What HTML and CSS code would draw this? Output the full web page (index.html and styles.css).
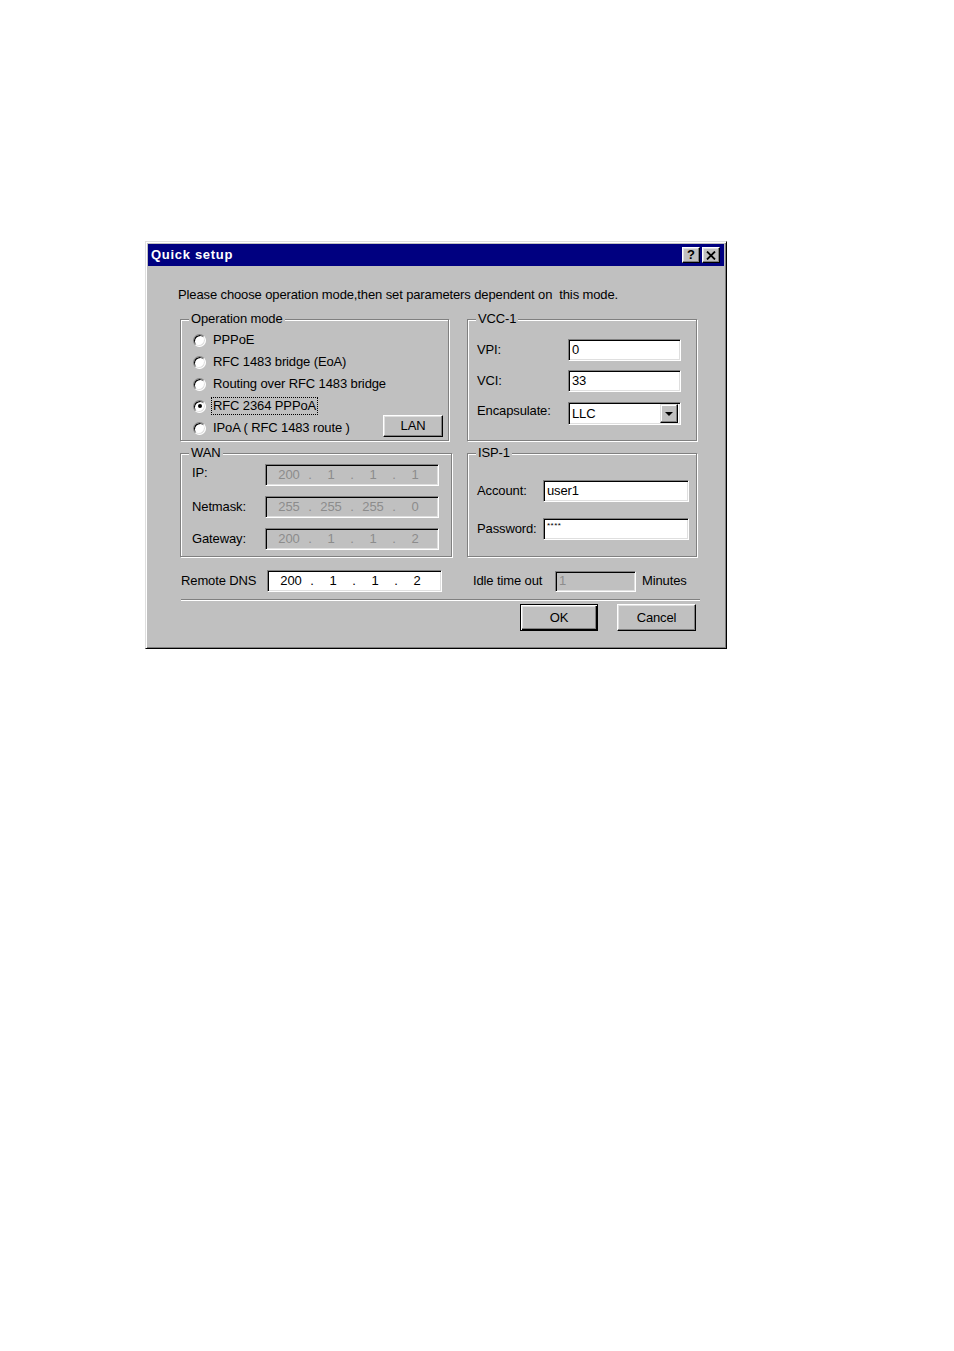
FILE: index.html
```html
<!DOCTYPE html>
<html>
<head>
<meta charset="utf-8">
<title>Quick setup</title>
<link rel="stylesheet" href="styles.css">
</head>
<body>
<div class="dialog">
  <div class="titlebar">
    <span class="title">Quick setup</span>
    <span class="cap-btn help">?</span>
    <span class="cap-btn close"><svg width="10" height="9" viewBox="0 0 10 9"><path d="M1 0.5 L9 8.5 M9 0.5 L1 8.5" stroke="#000" stroke-width="1.8" fill="none"/></svg></span>
  </div>
  <div class="content">
    <div class="intro">Please choose operation mode,then set parameters dependent on &nbsp;this mode.</div>

    <div class="row row1">
      <div class="group opmode">
        <div class="gtitle">Operation mode</div>
        <div class="radio-row"><span class="radio"></span><span>PPPoE</span></div>
        <div class="radio-row"><span class="radio"></span><span>RFC 1483 bridge (EoA)</span></div>
        <div class="radio-row"><span class="radio"></span><span>Routing over RFC 1483 bridge</span></div>
        <div class="radio-row"><span class="radio checked"></span><span class="focus">RFC 2364 PPPoA</span></div>
        <div class="radio-row"><span class="radio"></span><span>IPoA ( RFC 1483 route )</span><span class="btn lan">LAN</span></div>
      </div>
      <div class="group vcc">
        <div class="gtitle">VCC-1</div>
        <div class="form vcc-form">
          <span class="lbl">VPI:</span><span class="field">0</span>
          <span class="lbl">VCI:</span><span class="field">33</span>
          <span class="lbl enc">Encapsulate:</span><span class="field select"><span>LLC</span><span class="drop"><svg width="8" height="4" viewBox="0 0 8 4"><path d="M0 0 H8 L4 4 Z" fill="#000"/></svg></span></span>
        </div>
      </div>
    </div>

    <div class="row row2">
      <div class="group wan">
        <div class="gtitle">WAN</div>
        <div class="form wan-form">
          <span class="lbl">IP:</span>
          <span class="field ip disabled"><span>200</span><i>.</i><span>1</span><i>.</i><span>1</span><i>.</i><span>1</span></span>
          <span class="lbl">Netmask:</span>
          <span class="field ip disabled"><span>255</span><i>.</i><span>255</span><i>.</i><span>255</span><i>.</i><span>0</span></span>
          <span class="lbl">Gateway:</span>
          <span class="field ip disabled"><span>200</span><i>.</i><span>1</span><i>.</i><span>1</span><i>.</i><span>2</span></span>
        </div>
      </div>
      <div class="group isp">
        <div class="gtitle">ISP-1</div>
        <div class="form isp-form">
          <span class="lbl">Account:</span><span class="field">user1</span>
          <span class="lbl">Password:</span><span class="field pwd">****</span>
        </div>
      </div>
    </div>

    <div class="bottom">
      <span class="lbl dns-lbl">Remote DNS</span>
      <span class="field ip dns"><span>200</span><i>.</i><span>1</span><i>.</i><span>1</span><i>.</i><span>2</span></span>
      <span class="lbl idle-lbl">Idle time out</span>
      <span class="field idle disabled">1</span>
      <span class="lbl minutes">Minutes</span>
    </div>

    <div class="separator"></div>

    <div class="buttons">
      <span class="btn default">OK</span>
      <span class="btn cancel">Cancel</span>
    </div>
  </div>
</div>
</body>
</html>
```

FILE: styles.css
```css
html, body {
  margin: 0;
  padding: 0;
  background: #ffffff;
}

body {
  font-family: "Liberation Sans", Arial, sans-serif;
  font-size: 13px;
  line-height: 14px;
  letter-spacing: -0.12px;
  color: #000;
}

.dialog {
  margin: 241px 0 0 145px;
  width: 582px;
  height: 408px;
  box-sizing: border-box;
  background: #c0c0c0;
  border: 1px solid;
  border-color: #dfdfdf #000 #000 #dfdfdf;
  box-shadow: inset 1px 1px #fff, inset -1px -1px #808080;
  padding: 2px;
}

.titlebar {
  height: 22px;
  background: #000080;
  display: flex;
  align-items: center;
  padding: 0 4px 0 3px;
}

.title {
  color: #fff;
  font-weight: bold;
  letter-spacing: 0.7px;
  flex: 1;
}

.cap-btn {
  width: 18px;
  height: 16px;
  box-sizing: border-box;
  background: #c0c0c0;
  border: 1px solid;
  border-color: #fff #000 #000 #fff;
  box-shadow: inset -1px -1px #808080, inset 1px 1px #dfdfdf;
  display: flex;
  align-items: center;
  justify-content: center;
  font-weight: bold;
  font-size: 13px;
}

.cap-btn.close {
  margin-left: 2px;
}

.content {
  padding: 22px 27px 0 32px;
}

.intro {
  margin-left: -2px;
  height: 14px;
  white-space: nowrap;
}

.row {
  display: flex;
  justify-content: space-between;
}

.row1 {
  margin-top: 17px;
}

.row1 .group {
  height: 122px;
}

.row2 {
  margin-top: 12px;
}

.row2 .group {
  height: 104px;
}

.group {
  box-sizing: border-box;
  border: 1px solid #808080;
  box-shadow: inset 1px 1px #fff, 1px 1px #fff;
}

.opmode { width: 269px; }
.vcc { width: 230px; }
.wan { width: 272px; }
.isp { width: 230px; }

.gtitle {
  display: table;
  background: #c0c0c0;
  margin-top: -8px;
  margin-left: 8px;
  padding: 0 2px;
  height: 14px;
}

.opmode .gtitle { margin-left: 8px; margin-bottom: 3px; }
.vcc .gtitle { margin-bottom: 13px; }
.wan .gtitle { margin-bottom: 4px; margin-left: 8px; }
.isp .gtitle { margin-bottom: 20px; }

.radio-row {
  display: flex;
  align-items: center;
  height: 22px;
  padding-left: 12px;
  padding-right: 5px;
}

.radio {
  width: 13px;
  height: 13px;
  box-sizing: border-box;
  border-radius: 50%;
  background: #fff;
  border: 1px solid;
  border-color: #808080 #fff #fff #808080;
  box-shadow: inset 1px 1px #000, inset -1px -1px #dfdfdf;
  margin-right: 7px;
  display: flex;
  align-items: center;
  justify-content: center;
  flex: none;
}

.radio.checked::after {
  content: "";
  width: 4px;
  height: 4px;
  border-radius: 50%;
  background: #000;
}

.focus {
  outline: 1px dotted #000;
  outline-offset: 1px;
  margin-left: 0;
}

.btn {
  box-sizing: border-box;
  background: #c0c0c0;
  border: 1px solid;
  border-color: #fff #000 #000 #fff;
  box-shadow: inset -1px -1px #808080, inset 1px 1px #dfdfdf;
  display: flex;
  align-items: center;
  justify-content: center;
}

.lan {
  margin-left: auto;
  width: 60px;
  height: 22px;
  margin-top: -4px;
}

.field {
  box-sizing: border-box;
  height: 22px;
  background: #fff;
  border: 1px solid;
  border-color: #808080 #fff #fff #808080;
  box-shadow: inset 1px 1px #000, inset -1px -1px #dfdfdf;
  display: flex;
  align-items: center;
  padding-left: 3px;
  white-space: nowrap;
}

.field.disabled {
  background: #c0c0c0;
  color: #8c8c8c;
}

.form {
  display: grid;
  align-items: center;
}

.vcc-form {
  grid-template-columns: 91px 113px;
  row-gap: 9px;
  padding-left: 9px;
}

.vcc-form .select {
  height: 23px;
  margin-top: 1px;
  justify-content: space-between;
  padding-right: 2px;
}

.vcc-form .enc {
  margin-top: -4px;
}

.drop {
  width: 18px;
  height: 19px;
  box-sizing: border-box;
  background: #c0c0c0;
  border: 1px solid;
  border-color: #dfdfdf #000 #000 #dfdfdf;
  box-shadow: inset -1px -1px #808080, inset 1px 1px #fff;
  display: flex;
  align-items: center;
  justify-content: center;
}

.wan-form {
  grid-template-columns: 73px 174px;
  row-gap: 10px;
  padding-left: 11px;
}

.wan-form .lbl:first-child {
  margin-top: -4px;
}

.ip {
  display: grid;
  grid-template-columns: 34px 8px 34px 8px 34px 8px 34px;
  padding-left: 6px;
  align-items: center;
}

.ip span,
.ip i {
  text-align: center;
  font-style: normal;
}

.isp-form {
  grid-template-columns: 66px 146px;
  row-gap: 16px;
  padding-left: 9px;
}

.pwd {
  align-items: flex-start;
  font-size: 8px;
  line-height: 10px;
  padding-top: 2px;
  letter-spacing: 0.5px;
}

.bottom {
  display: flex;
  align-items: center;
  margin-top: 13px;
  height: 22px;
}

.dns-lbl {
  width: 87px;
  box-sizing: border-box;
  padding-left: 1px;
}

.dns {
  width: 175px;
}

.idle-lbl {
  margin-left: 31px;
  width: 82px;
}

.idle {
  width: 81px;
  height: 21px;
}

.minutes {
  margin-left: 6px;
}

.separator {
  margin-top: 7px;
  margin-left: 1px;
  width: 519px;
  border-top: 1px solid #808080;
  border-bottom: 1px solid #fff;
  height: 0;
}

.buttons {
  display: flex;
  justify-content: flex-end;
  margin-top: 3px;
  margin-right: 1px;
}

.buttons .btn {
  height: 27px;
}

.btn.default {
  width: 78px;
  border-color: #000;
  box-shadow: inset 1px 1px #fff, inset -1px -1px #000, inset -2px -2px #808080, inset 2px 2px #dfdfdf;
}

.btn.cancel {
  width: 79px;
  margin-left: 19px;
}
```
